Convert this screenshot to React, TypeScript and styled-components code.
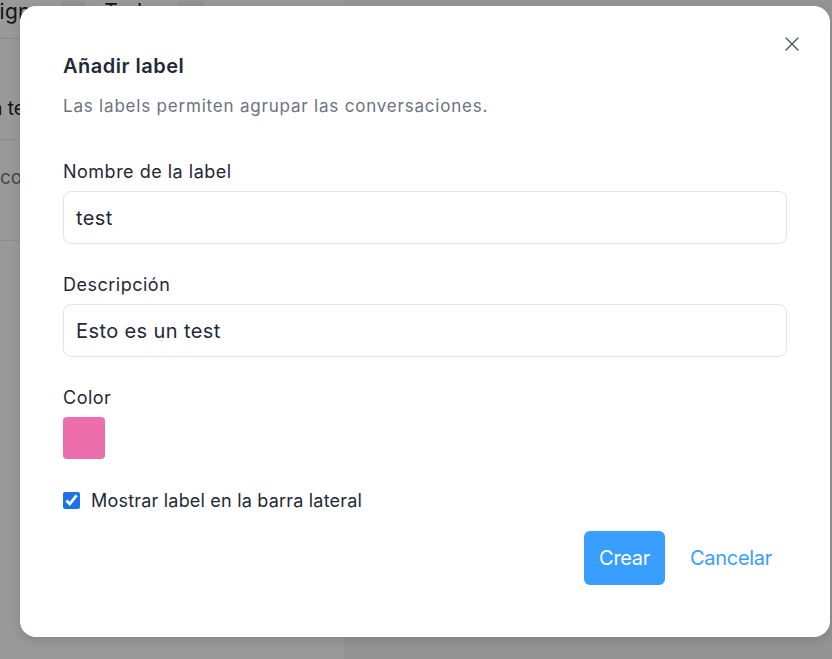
import React from "react";
import styled, { createGlobalStyle } from "styled-components";

const Global = createGlobalStyle`
  html, body { margin: 0; padding: 0; }
  body { font-family: Inter, "Noto Sans", sans-serif; width: 832px; height: 659px; overflow: hidden; }
  * { box-sizing: border-box; }
`;

const Page = styled.div`
  position: relative;
  width: 832px;
  height: 659px;
  display: flex;
  background: #f7f7f8;
  overflow: hidden;
`;

const ListPanel = styled.div`
  width: 346px;
  height: 100%;
  background: #fff;
  border-right: 1px solid #ececec;
  display: flex;
  flex-direction: column;
  overflow: hidden;
`;

const Tabs = styled.div`
  display: flex;
  align-items: center;
  gap: 18px;
  height: 54px;
  margin-top: -15px;
  margin-left: -62px;
  border-bottom: 1px solid #e6e6e6;
  font-size: 21px;
  color: #222;
  font-family: Inter, sans-serif;
  letter-spacing: 0.3px;
`;

const Tab = styled.div`
  display: flex;
  align-items: center;
  gap: 10px;
  white-space: nowrap;
`;

const Count = styled.span`
  font-size: 12px;
  background: #f2f2f2;
  color: #555;
  border-radius: 4px;
  padding: 3px 6px;
`;

const ConvRow = styled.div`
  height: 101px;
  border-bottom: 1px solid #ececec;
  display: flex;
  flex-direction: column;
  gap: 8px;
  padding-top: 26px;
  font-size: 19px;
  line-height: 24px;
  white-space: nowrap;
  overflow: hidden;
`;

const ConvLine = styled.div<{ $shift: number; $muted?: boolean }>`
  margin-left: ${(p) => -p.$shift}px;
  color: ${(p) => (p.$muted ? "#777" : "#222")};
`;

const MainPanel = styled.div`
  flex: 1;
`;

const Overlay = styled.div`
  position: absolute;
  inset: 0;
  background: rgba(0, 0, 0, 0.4);
`;

const Modal = styled.div`
  position: absolute;
  left: 20px;
  top: 6px;
  width: 810px;
  height: 631px;
  background: #fff;
  border-radius: 16px;
  box-shadow: 0 4px 12px rgba(0, 0, 0, 0.12);
  padding: 45px 43px 0 43px;
  display: flex;
  flex-direction: column;
  font-family: Inter, sans-serif;
`;

const CloseBtn = styled.button`
  position: absolute;
  top: 24px;
  right: 24px;
  width: 28px;
  height: 28px;
  border: 0;
  background: transparent;
  padding: 0;
  display: flex;
  align-items: center;
  justify-content: center;
  color: #4b5563;
`;

const Title = styled.h2`
  margin: 0;
  font-size: 20px;
  line-height: 30px;
  font-weight: 600;
  color: #1f2937;
  letter-spacing: 0.5px;
`;

const Subtitle = styled.p`
  margin: 13px 0 0 0;
  font-size: 17px;
  line-height: 24px;
  color: #6b7280;
  letter-spacing: 0.8px;
`;

const Form = styled.div`
  margin-top: 43px;
  display: flex;
  flex-direction: column;
`;

const Field = styled.div`
  display: flex;
  flex-direction: column;
  gap: 8px;
  margin-bottom: 30px;
`;

const Label = styled.label`
  font-size: 18px;
  line-height: 22px;
  color: #1f2937;
  letter-spacing: 0.5px;
`;

const Input = styled.input`
  width: 100%;
  height: 53px;
  border: 1px solid #e2e3e7;
  border-radius: 8px;
  padding: 0 12px;
  font-family: Inter, sans-serif;
  font-size: 20px;
  color: #1f2937;
  outline: none;
  background: #fff;
  letter-spacing: 0.4px;
`;

const Swatch = styled.div<{ $color: string }>`
  width: 42px;
  height: 42px;
  border-radius: 4px;
  background: ${(p) => p.$color};
`;

const CheckRow = styled.label`
  display: flex;
  align-items: center;
  gap: 11px;
  font-size: 18px;
  color: #1f2937;
  margin-top: 1px;
  letter-spacing: 0.2px;
`;

const Check = styled.input`
  width: 17px;
  height: 17px;
  margin: 0;
  accent-color: #1a73e8;
`;

const Actions = styled.div`
  display: flex;
  justify-content: flex-end;
  align-items: center;
  gap: 10px;
  margin-top: 20px;
  padding-right: 0;
`;

const Button = styled.button<{ $variant: "primary" | "link" }>`
  height: 54px;
  padding: 0 15px;
  border-radius: 6px;
  border: 0;
  font-family: Inter, sans-serif;
  font-size: 20px;
  letter-spacing: -0.3px;
  background: ${(p) => (p.$variant === "primary" ? "#389eff" : "transparent")};
  color: ${(p) => (p.$variant === "primary" ? "#fff" : "#389eff")};
`;

export default function App() {
  return (
    <>
      <Global />
      <Page>
        <ListPanel>
          <Tabs>
            <Tab>
              Sin asignar <Count>10</Count>
            </Tab>
            <Tab>
              Todos <Count>47</Count>
            </Tab>
          </Tabs>
          <ConvRow>
            <ConvLine $shift={0}>&nbsp;</ConvLine>
            <ConvLine $shift={142}>Hola, esto es un test</ConvLine>
          </ConvRow>
          <ConvRow>
            <ConvLine $shift={0} $muted>
              con
            </ConvLine>
          </ConvRow>
        </ListPanel>
        <MainPanel />
        <Overlay />
        <Modal>
          <CloseBtn aria-label="Cerrar">
            <svg width="16" height="16" viewBox="0 0 16 16" fill="none" stroke="currentColor" strokeWidth="1.4" strokeLinecap="round">
              <path d="M2 2L14 14M14 2L2 14" />
            </svg>
          </CloseBtn>
          <Title>Añadir label</Title>
          <Subtitle>Las labels permiten agrupar las conversaciones.</Subtitle>
          <Form>
            <Field>
              <Label>Nombre de la label</Label>
              <Input defaultValue="test" />
            </Field>
            <Field>
              <Label>Descripción</Label>
              <Input defaultValue="Esto es un test" />
            </Field>
            <Field>
              <Label>Color</Label>
              <Swatch $color="#ec6ead" />
            </Field>
            <CheckRow>
              <Check type="checkbox" defaultChecked />
              Mostrar label en la barra lateral
            </CheckRow>
            <Actions>
              <Button $variant="primary">Crear</Button>
              <Button $variant="link">Cancelar</Button>
            </Actions>
          </Form>
        </Modal>
      </Page>
    </>
  );
}
